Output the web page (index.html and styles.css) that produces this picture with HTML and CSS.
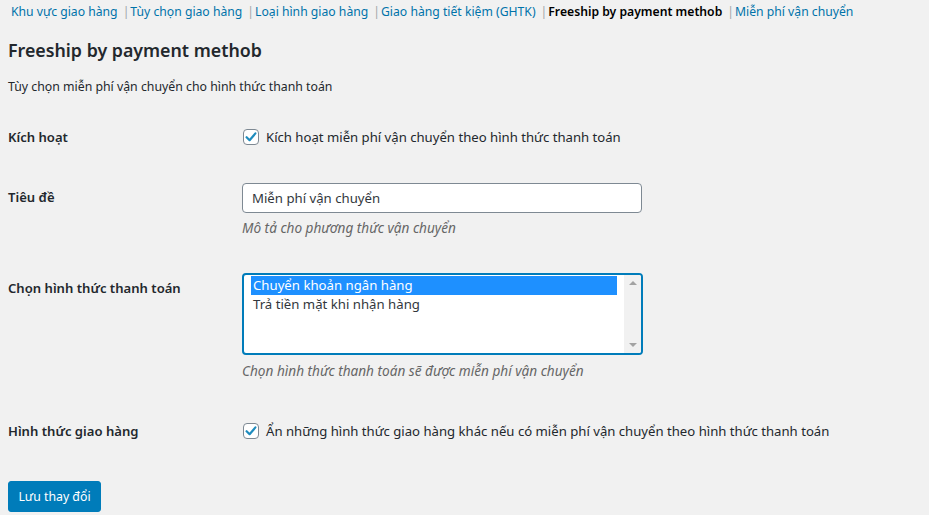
FILE: index.html
```html
<!DOCTYPE html>
<html lang="vi">
<head>
<meta charset="utf-8">
<title>Freeship by payment methob</title>
<link rel="stylesheet" href="styles.css">
</head>
<body>
<div class="page">
  <ul class="subnav">
    <li><a href="#">Khu vực giao hàng</a><span class="sep">|</span></li>
    <li><a href="#">Tùy chọn giao hàng</a><span class="sep">|</span></li>
    <li><a href="#">Loại hình giao hàng</a><span class="sep">|</span></li>
    <li><a href="#">Giao hàng tiết kiệm (GHTK)</a><span class="sep">|</span></li>
    <li><a href="#" class="current">Freeship by payment methob</a><span class="sep">|</span></li>
    <li><a href="#">Miễn phí vận chuyển</a></li>
  </ul>

  <h2 class="title">Freeship by payment methob</h2>
  <p class="intro">Tùy chọn miễn phí vận chuyển cho hình thức thanh toán</p>

  <div class="row row-enable">
    <div class="label">Kích hoạt</div>
    <div class="field">
      <label class="check">
        <span class="box"><svg viewBox="0 0 16 16" width="16" height="16"><path d="M3.6 8.2 L6.6 11.2 L12.4 4.4" fill="none" stroke="#1e8cbe" stroke-width="2.2" stroke-linecap="round" stroke-linejoin="round"/></svg></span>
        <span>Kích hoạt miễn phí vận chuyển theo hình thức thanh toán</span>
      </label>
    </div>
  </div>

  <div class="row row-title">
    <div class="label">Tiêu đề</div>
    <div class="field">
      <div class="input">Miễn phí vận chuyển</div>
      <p class="desc">Mô tả cho phương thức vận chuyển</p>
    </div>
  </div>

  <div class="row row-method">
    <div class="label">Chọn hình thức thanh toán</div>
    <div class="field">
      <div class="listbox">
        <div class="options">
          <div class="option selected">Chuyển khoản ngân hàng</div>
          <div class="option">Trả tiền mặt khi nhận hàng</div>
        </div>
        <div class="scrollbar">
          <span class="arrow up"></span>
          <span class="arrow down"></span>
        </div>
      </div>
      <p class="desc desc-list">Chọn hình thức thanh toán sẽ được miễn phí vận chuyển</p>
    </div>
  </div>

  <div class="row row-hide">
    <div class="label">Hình thức giao hàng</div>
    <div class="field">
      <label class="check">
        <span class="box"><svg viewBox="0 0 16 16" width="16" height="16"><path d="M3.6 8.2 L6.6 11.2 L12.4 4.4" fill="none" stroke="#1e8cbe" stroke-width="2.2" stroke-linecap="round" stroke-linejoin="round"/></svg></span>
        <span>Ẩn những hình thức giao hàng khác nếu có miễn phí vận chuyển theo hình thức thanh toán</span>
      </label>
    </div>
  </div>

  <div class="actions">
    <button class="button-primary" type="button">Lưu thay đổi</button>
  </div>
</div>
</body>
</html>
```

FILE: styles.css
```css
html, body {
  margin: 0;
  padding: 0;
  background: #f1f1f1;
}
body {
  font-family: "Noto Sans", "Open Sans", sans-serif;
  font-size: 12.3px;
  color: #23282d;
}
.page {
  padding: 0 8px;
}
.subnav {
  list-style: none;
  margin: 3px 0 0 0;
  padding: 0 0 0 3px;
  display: flex;
  line-height: 18px;
  font-size: 12.2px;
  white-space: nowrap;
}
.subnav a {
  color: #0073aa;
  text-decoration: none;
}
.subnav a.current {
  color: #000;
  font-weight: 600;
}
.subnav .sep {
  color: #a0a5aa;
  margin: 0 1px 0 5px;
}
.title {
  margin: 18px 0 0 0;
  font-size: 17.8px;
  line-height: 22px;
  font-weight: 600;
  color: #23282d;
}
.intro {
  margin: 17px 0 0 0;
  line-height: 18px;
}
.row {
  display: grid;
  grid-template-columns: 234px 1fr;
}
.label {
  font-size: 13.1px;
  font-weight: 600;
  line-height: 18px;
  color: #23282d;
}
.row-enable { margin-top: 32px; }
.row-title { margin-top: 37px; }
.row-title .label { padding-top: 5px; }
.row-method { margin-top: 36px; }
.row-method .label { padding-top: 6px; }
.row-hide { margin-top: 42px; }

.check {
  display: flex;
  align-items: center;
  gap: 7px;
  line-height: 18px;
  font-size: 13.15px;
}
.box {
  width: 16px;
  height: 16px;
  box-sizing: border-box;
  border: 1px solid #7e8993;
  border-radius: 4px;
  background: #fff;
  margin-left: 1px;
  position: relative;
}
.box svg {
  position: absolute;
  left: -1px;
  top: -1px;
}
.input {
  width: 400px;
  height: 30px;
  box-sizing: border-box;
  border: 1px solid #7e8993;
  border-radius: 4px;
  background: #fff;
  padding: 0 9px;
  line-height: 28px;
  font-size: 13.2px;
  color: #32373c;
}
.desc {
  margin: 6px 0 0 0;
  line-height: 18px;
  font-size: 13.6px;
  font-style: italic;
  color: #666;
}
.desc-list {
  margin-top: 7px;
}
.listbox {
  width: 401px;
  height: 82px;
  box-sizing: border-box;
  border: 2px solid #007cba;
  border-radius: 4px;
  background: #fff;
  display: flex;
  overflow: hidden;
}
.options {
  flex: 1;
  padding: 1px 7px 0 7px;
}
.option {
  font-size: 13.2px;
  line-height: 19px;
  padding-left: 2px;
  color: #32373c;
}
.option.selected {
  background: #1e90ff;
  color: #fff;
}
.scrollbar {
  width: 17px;
  background: #f1f1f1;
  display: flex;
  flex-direction: column;
  justify-content: space-between;
  align-items: center;
  padding: 6px 0 6px;
}
.arrow {
  width: 0;
  height: 0;
  border-left: 4px solid transparent;
  border-right: 4px solid transparent;
}
.arrow.up { border-bottom: 4px solid #a3a3a3; }
.arrow.down { border-top: 4px solid #a3a3a3; }

.actions {
  margin-top: 41px;
}
.button-primary {
  font-family: inherit;
  font-size: 12.3px;
  background: #007cba;
  color: #fff;
  border: 1px solid #007cba;
  border-radius: 3px;
  height: 31px;
  width: 93px;
  padding: 0;
  line-height: 29px;
  cursor: pointer;
}
```
